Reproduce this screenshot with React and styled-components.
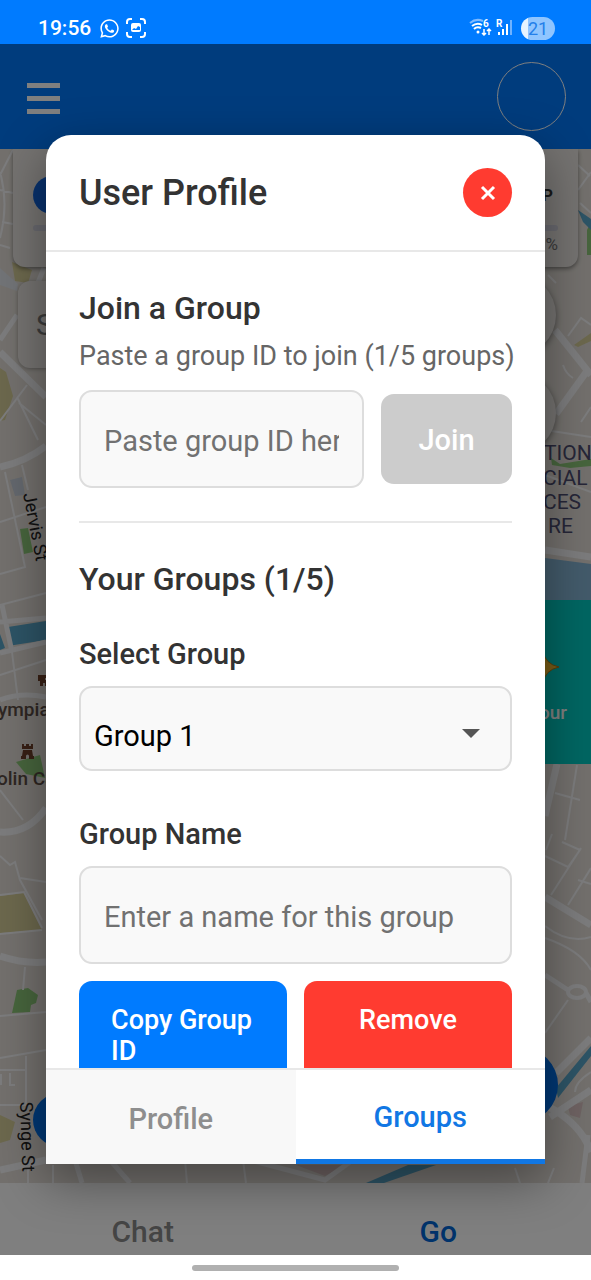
import { useState } from 'react';
import styled, { createGlobalStyle } from 'styled-components';
import { FaWhatsapp } from 'react-icons/fa';

const GlobalStyle = createGlobalStyle`
  * {
    box-sizing: border-box;
  }

  body {
    margin: 0;
    background: #ffffff;
    font-family: Roboto, 'Noto Sans', sans-serif;
  }

  button, input, select {
    font-family: inherit;
  }
`;

// === Device chrome ===
const Phone = styled.div`
  display: flex;
  flex-direction: column;
  height: 100vh;
  overflow: hidden;
`;

const StatusBar = styled.div`
  display: flex;
  align-items: center;
  justify-content: space-between;
  flex: none;
  height: 44px;
  padding: 12px 36px 0 38px;
  background: #007bff;
  color: #ffffff;
`;

const StatusGroup = styled.div`
  display: flex;
  align-items: center;
  gap: ${({ $gap }) => $gap}px;
`;

const Clock = styled.span`
  font-size: 21px;
  font-weight: 500;
  line-height: 24px;
  margin-right: 2px;
`;

const Battery = styled.span`
  width: 34px;
  height: 23px;
  margin-left: 5px;
  border-radius: 12px;
  background: linear-gradient(to right, #e6f3ff 21%, #8fc5ff 21%);
  color: #2380ea;
  font-size: 18px;
  line-height: 23px;
  text-align: center;
`;

const GestureBar = styled.div`
  display: flex;
  align-items: center;
  justify-content: center;
  flex: none;
  height: 25px;
  background: #ffffff;

  &::after {
    content: '';
    width: 35%;
    height: 6px;
    border-radius: 3px;
    background: #b0b0b0;
  }
`;

// === App behind the dialog ===
const Stage = styled.main`
  position: relative;
  flex: 1;
  min-height: 0;
  display: flex;
  flex-direction: column;
`;

const AppHeader = styled.header`
  display: flex;
  align-items: center;
  justify-content: space-between;
  flex: none;
  height: 105px;
  padding: 0 25px 0 27px;
  background: #0078fa;
`;

const MenuButton = styled.button`
  display: flex;
  flex-direction: column;
  gap: 8px;
  width: 33px;
  padding: 4px 0 0;
  border: 0;
  background: none;

  span {
    width: 100%;
    height: 5px;
    background: #ffffff;
  }
`;

const Avatar = styled.button`
  width: 69px;
  height: 69px;
  border: 1px solid #ffffff;
  border-radius: 50%;
  background: none;
`;

const MapArea = styled.section`
  position: relative;
  flex: 1;
  min-height: 0;
  overflow: hidden;
  background: #e6e1da;
`;

const MapDrawing = styled.svg`
  display: block;
  width: 100%;
  height: 100%;
`;

const ProgressCard = styled.div`
  position: absolute;
  top: 0;
  left: 13px;
  right: 13px;
  height: 118px;
  padding: 26px 20px 0;
  border-radius: 0 0 12px 12px;
  background: #eae7e3;
  box-shadow: 0 2px 4px rgba(0, 0, 0, 0.4);
`;

const ProgressRow = styled.div`
  display: flex;
  align-items: center;
  justify-content: space-between;
  height: 40px;
  padding-right: 5px;
  color: #333333;
  font-size: 17px;
  font-weight: 700;
`;

const LevelDot = styled.span`
  width: 38px;
  height: 38px;
  border-radius: 50%;
  background: #1264dc;
`;

const ProgressTrack = styled.div`
  height: 6px;
  margin: 10px 0 3px;
  border-radius: 3px;
  background: #d2d2de;
`;

const ProgressValue = styled.div`
  color: #777777;
  font-size: 17px;
  line-height: 20px;
  text-align: right;
`;

const SearchCard = styled.div`
  position: absolute;
  top: 132px;
  left: 18px;
  width: 60%;
  height: 87px;
  padding: 0 18px;
  border-radius: 12px;
  background: #eae7e3;
  box-shadow: 0 1px 4px rgba(0, 0, 0, 0.3);
  color: #777777;
  font-size: 30px;
  line-height: 87px;
`;

const MapControl = styled.button`
  position: absolute;
  top: ${({ $top }) => $top}px;
  right: 35px;
  width: 82px;
  height: 82px;
  border: 0;
  border-radius: 50%;
  background: #eae7e3;
  box-shadow: 0 2px 6px rgba(0, 0, 0, 0.4);
`;

const TourTile = styled.div`
  position: absolute;
  top: 451px;
  right: 0;
  display: flex;
  flex-direction: column;
  align-items: flex-end;
  gap: 19px;
  width: 120px;
  height: 164px;
  padding: 51px 24px 0 0;
  background: #00ccc4;
  color: #ffffff;
  font-size: 19px;
  font-weight: 500;
  line-height: 22px;

  svg {
    margin-right: 8px;
  }
`;

const RoundAction = styled.button`
  position: absolute;
  bottom: ${({ $bottom }) => $bottom}px;
  left: ${({ $left }) => ($left ? `${$left}px` : 'auto')};
  right: ${({ $right }) => ($right ? `${$right}px` : 'auto')};
  width: ${({ $size }) => $size}px;
  height: ${({ $size }) => $size}px;
  border: 0;
  border-radius: 50%;
  background: #0070ea;
`;

const BottomNav = styled.nav`
  display: flex;
  flex: none;
  height: 72px;
  padding-top: 24px;
  background: #ffffff;
`;

const NavLink = styled.a`
  flex: 1;
  padding-right: 10px;
  color: ${({ $active }) => ($active ? '#0066d6' : '#8a8a8a')};
  font-size: 30px;
  font-weight: 500;
  line-height: 50px;
  text-align: center;
  text-decoration: none;
`;

// === Dialog ===
const Overlay = styled.div`
  position: absolute;
  inset: 0;
  display: flex;
  align-items: center;
  justify-content: center;
  padding: 0 46px;
  background: rgba(0, 0, 0, 0.5);
`;

const Dialog = styled.section`
  display: flex;
  flex-direction: column;
  width: 100%;
  max-height: 85%;
  overflow: hidden;
  border-radius: 25px 25px 0 0;
  background: #ffffff;
  box-shadow: 0 16px 50px rgba(0, 0, 0, 0.4);
  color: #333333;
`;

const DialogHeader = styled.header`
  display: flex;
  align-items: center;
  justify-content: space-between;
  flex: none;
  padding: 33px 33px 32px;
  border-bottom: 2px solid #e8e8e8;
`;

const DialogTitle = styled.h2`
  margin: 0;
  font-size: 36px;
  font-weight: 500;
  line-height: 50px;
`;

const CloseButton = styled.button`
  display: grid;
  place-items: center;
  width: 49px;
  height: 49px;
  padding: 0;
  border: 0;
  border-radius: 50%;
  background: #ff3b30;
`;

const DialogBody = styled.div`
  flex: 1;
  min-height: 0;
  padding: 0 33px;
  overflow-y: auto;
  scrollbar-width: none;
`;

const Section = styled.section`
  padding: 32px 0 33px;

  & + & {
    border-top: 2px solid #e8e8e8;
  }
`;

const SectionTitle = styled.h3`
  margin: 0;
  font-size: 32px;
  font-weight: 500;
  line-height: 48px;
`;

const Hint = styled.label`
  display: block;
  margin-bottom: 10px;
  color: #666666;
  font-size: 27px;
  line-height: 48px;
  white-space: nowrap;
`;

const Field = styled.div`
  margin-top: ${({ $top }) => $top}px;
`;

const FieldLabel = styled.label`
  display: block;
  margin-bottom: 8px;
  font-size: 29px;
  font-weight: 500;
  line-height: 48px;
`;

const Row = styled.div`
  display: flex;
  align-items: ${({ $align }) => $align || 'center'};
  gap: 17px;
`;

const TextInput = styled.input`
  flex: 1;
  width: 100%;
  min-width: 0;
  height: 98px;
  padding: 4px 23px 0;
  border: 2px solid #dddddd;
  border-radius: 13px;
  background: #f9f9f9;
  color: #000000;
  font-size: 29px;

  &::placeholder {
    color: #717171;
    opacity: 1;
  }
`;

const JoinButton = styled.button`
  width: 131px;
  height: 90px;
  padding: 2px 0 0;
  border: 0;
  border-radius: 13px;
  background: #cccccc;
  color: #ffffff;
  font-size: 29px;
  font-weight: 500;
`;

const SelectWrap = styled.div`
  position: relative;

  svg {
    position: absolute;
    top: 50%;
    right: 32px;
    margin-top: 1px;
    pointer-events: none;
  }
`;

const Select = styled.select`
  display: block;
  width: 100%;
  height: 85px;
  padding: 16px 13px 0;
  border: 2px solid #dddddd;
  border-radius: 13px;
  appearance: none;
  background: #f9f9f9;
  color: #000000;
  font-size: 29px;
`;

const ActionButton = styled.button`
  display: flex;
  flex: 1;
  align-items: flex-start;
  justify-content: center;
  padding: 24px 32px;
  border: 0;
  border-radius: 13px;
  background: ${({ $danger }) => ($danger ? '#ff3b30' : '#007bff')};
  color: #ffffff;
  font-size: 27px;
  font-weight: 500;
  line-height: 31px;
  text-align: left;
`;

const TabList = styled.div`
  display: flex;
  flex: none;
  border-top: 2px solid #e8e8e8;
`;

const Tab = styled.button`
  flex: 1;
  height: 94px;
  padding: 4px 0 0;
  border: 0;
  border-bottom: ${({ $active }) => ($active ? '5px solid #1177e4' : '0')};
  background: ${({ $active }) => ($active ? '#ffffff' : '#f8f8f8')};
  color: ${({ $active }) => ($active ? '#1177e4' : '#8e8e8e')};
  font-size: 29px;
  font-weight: 500;
`;

const roads = [
  { width: 7, lines: ['M0 352 L46 397', 'M0 467 Q25 462 46 446', 'M0 832 Q28 834 46 808', 'M0 956 Q24 964 46 962', 'M0 1170 L46 1160', 'M555 330 L591 375', 'M587 371 L556 414', 'M545 550 L591 557', 'M557 764 L545 816', 'M545 897 L591 925', 'M556 1073 L591 1038', 'M550 1117 L591 1090', 'M545 1105 Q580 1122 591 1152'] },
  { width: 5, lines: ['M17 315 L0 340', 'M0 622 L46 618', 'M0 653 L46 642', 'M2 605 L12 652', 'M545 975 L568 990', 'M586 993 L591 1002', 'M588 1135 L582 1183', 'M44 268 L35 290', 'M0 700 Q20 692 46 697', 'M250 1160 L325 1180 L350 1162', 'M75 1160 L82 1183', 'M110 1160 L130 1183'] },
  { width: 2, lines: ['M0 172 Q9 204 0 238', 'M13 150 L0 175', 'M0 190 L13 193', 'M2 222 L13 224', 'M0 245 L10 248', 'M0 421 L27 385', 'M17 397 L38 440', 'M19 403 L46 425', 'M5 472 L25 567 L0 574', 'M22 465 L28 490', 'M0 522 L46 507', 'M0 605 L46 593', 'M12 652 L18 700', 'M0 675 L46 660', 'M0 790 L23 820', 'M0 856 L10 865 L15 862 L20 880 L42 920', 'M20 878 L46 882', 'M0 895 L24 892 L42 928', 'M0 934 L42 930', 'M25 967 L23 990', 'M0 1016 L46 1012', 'M0 1058 L46 1050', 'M26 1056 V1105 H0', 'M0 1070 H25 M1 1074 V1085 M10 1073 V1085 H15', 'M578 165 L590 176', 'M578 190 L591 172', 'M580 203 L591 213', 'M548 275 L556 283', 'M568 336 L581 318 L591 325', 'M563 365 Q566 374 573 378', 'M581 422 L591 407', 'M545 430 L591 437', 'M545 475 L591 492', 'M577 765 L565 840', 'M555 793 L580 800', 'M545 856 L568 867 L580 850 L562 842', 'M552 834 L546 850', 'M551 895 L581 848', 'M568 905 L591 868', 'M578 880 L591 884', 'M545 926 Q568 944 591 937', 'M545 938 Q580 950 591 970', 'M545 1033 L568 1000', 'M575 1092 Q575 1082 591 1072', 'M515 1168 L520 1183', 'M554 1168 L548 1183', 'M185 1160 L187 1183', 'M243 1160 L246 1183', 'M28 1165 V1183', 'M53 1165 V1183'] },
];

const CityMap = () => (
  <MapDrawing viewBox="0 149 591 1034" preserveAspectRatio="xMidYMid slice" aria-hidden="true">
    <g fill="#d8d09a">
      <path d="M12 262 L32 270 L28 283 L15 281 Z" />
      <path d="M0 368 L6 372 L13 396 L5 420 L0 421 Z" />
      <path d="M0 896 L24 893 L42 930 L0 933 Z" />
      <path d="M0 1115 L15 1122 L10 1140 L0 1143 Z" />
      <path d="M574 345 L591 333 V341 L578 347 Z" />
    </g>
    <g fill="#8fcb7a">
      <path d="M20 529 L28 528 L33 552 L24 554 Z" />
      <path d="M16 762 L40 755 L45 778 L26 774 Z" />
      <path d="M17 990 L28 988 L38 995 L36 1003 L31 1005 L30 1012 L12 1013 Z" />
      <path d="M587 230 L591 222 V255 H587 Z" />
      <path d="M551 458 L560 464 L591 459 V466 L570 468 L552 465 Z" />
    </g>
    <g fill="#5ba8cc">
      <path d="M8 627 L46 621 V640 L8 646 Z" />
      <path d="M0 634 L5 648 L0 650 Z" />
      <path d="M578 210 L591 219 V230 L583 222 Z" />
      <path d="M556 1088 L591 1046 V1056 L558 1098 Z" />
      <path d="M366 1183 L408 1165 H436 L384 1183 Z" />
    </g>
    <path d="M545 558 L591 564 V602 H545 Z" fill="#86b6d6" />
    <path d="M10 480 L22 477 L25 495 L15 496 Z" fill="#c8d0dc" />
    <path d="M0 268 L18 284 L17 291 L0 285 Z" fill="#e4e8ee" />
    <path d="M568 1106 L583 1102 L580 1118 L570 1115 Z M296 1165 H346 L325 1176 Z" fill="#dcc4c4" />
    {roads.map(({ width, lines }) => (
      <path key={width} d={lines.join(' ')} fill="none" stroke="#f8f8fa" strokeWidth={width} />
    ))}
    <ellipse cx="577" cy="992" rx="9" ry="6" fill="none" stroke="#f8f8fa" strokeWidth="4" />
    <g fill="#70402a">
      <path d="M22 744 h2 v2 h2 v-2 h3 v2 h2 v-2 h2 v5 h-11 Z M23 750 h9 l1 6 h1 v3 h-5 v-3 a1 1 0 0 0 -3 0 v3 h-5 v-3 h1 Z" />
      <path d="M38 675 h9 v3 h-2 v2 h2 v6 h-2 v-3 h-2 v3 h-3 v-5 h-2 Z" />
    </g>
    <g fontSize="19" fontWeight="500" fill="#5c4d45">
      <text x="-2" y="716">ympia</text>
      <text x="-3" y="785">olin Ca</text>
    </g>
    <g fontSize="18" fill="#222222">
      <text transform="translate(23 494) rotate(79)">Jervis St</text>
      <text transform="translate(20 1102) rotate(88)">Synge St</text>
    </g>
    <g fontSize="21" fill="#4c4c70">
      <text x="544" y="460">TION</text>
      <text x="543" y="485">CIAL</text>
      <text x="543" y="509">CES</text>
      <text x="548" y="533">RE</text>
    </g>
  </MapDrawing>
);

const CaptureIcon = () => (
  <svg width="20" height="20" viewBox="0 0 20 20" fill="none" aria-hidden="true">
    <path d="M1 6 V4 Q1 1 4 1 H6 M14 1 H16 Q19 1 19 4 V6 M19 14 V16 Q19 19 16 19 H14 M6 19 H4 Q1 19 1 16 V14" stroke="#fff" strokeWidth="2" />
    <rect x="5" y="5" width="10" height="9" rx="2" fill="#fff" />
    <path d="M6 12 L8 10 L10 11 L12 8 L14 9 V12 Z" fill="#007bff" />
  </svg>
);

const WifiIcon = () => (
  <svg width="24" height="20" viewBox="0 0 24 20" fill="none" aria-hidden="true">
    <path d="M1 5 Q7 0 14 3" stroke="#7fbaff" strokeWidth="2" />
    <path d="M3 8 Q8 4 13 7 M5 11 Q8 8 12 10" stroke="#fff" strokeWidth="2" />
    <circle cx="9" cy="14" r="1.5" fill="#fff" />
    <text x="14" y="9" fill="#fff" fontSize="10" fontWeight="700">6</text>
    <path d="M15 11 V17 M13 15 L15 17 L17 15 M20 17 V11 M18 13 L20 11 L22 13" stroke="#fff" strokeWidth="1.5" />
  </svg>
);

const SignalIcon = () => (
  <svg width="17" height="20" viewBox="0 0 17 20" aria-hidden="true">
    <text x="0" y="9" fill="#fff" fontSize="10" fontWeight="700">R</text>
    <path d="M2 14 h2 v3 h-2 Z M6 11 h2 v6 h-2 Z M10 6 h2 v11 h-2 Z" fill="#fff" />
    <path d="M14 2 h2 v15 h-2 Z" fill="#6fb2ff" />
  </svg>
);

export default function App() {
  const [tab, setTab] = useState('groups');

  return (
    <>
      <GlobalStyle />
      <Phone>
        <StatusBar>
          <StatusGroup $gap={6}>
            <Clock>19:56</Clock>
            <FaWhatsapp size={21} />
            <CaptureIcon />
          </StatusGroup>
          <StatusGroup $gap={3}>
            <WifiIcon />
            <SignalIcon />
            <Battery>21</Battery>
          </StatusGroup>
        </StatusBar>

        <Stage>
          <AppHeader>
            <MenuButton aria-label="Menu">
              <span />
              <span />
              <span />
            </MenuButton>
            <Avatar aria-label="Account" />
          </AppHeader>

          <MapArea>
            <CityMap />
            <ProgressCard>
              <ProgressRow>
                <LevelDot />
                <span>P</span>
              </ProgressRow>
              <ProgressTrack />
              <ProgressValue>%</ProgressValue>
            </ProgressCard>
            <SearchCard>S</SearchCard>
            <MapControl $top={125} aria-label="Zoom in" />
            <MapControl $top={223} aria-label="Zoom out" />
            <TourTile>
              <svg width="32" height="32" viewBox="0 0 32 32" aria-hidden="true">
                <path d="M16 0 Q18 13 32 16 Q18 19 16 32 Q14 19 0 16 Q14 13 16 0 Z" fill="#f0b82c" stroke="#b87a10" strokeWidth="1" />
              </svg>
              <span>Tour</span>
            </TourTile>
            <RoundAction $left={33} $bottom={36} $size={54} aria-label="Locate" />
            <RoundAction $right={33} $bottom={60} $size={76} aria-label="Add" />
          </MapArea>

          <BottomNav>
            <NavLink href="#chat">Chat</NavLink>
            <NavLink href="#go" $active>Go</NavLink>
          </BottomNav>

          <Overlay>
            <Dialog role="dialog" aria-modal="true" aria-labelledby="profile-title">
              <DialogHeader>
                <DialogTitle id="profile-title">User Profile</DialogTitle>
                <CloseButton aria-label="Close">
                  <svg width="16" height="16" viewBox="0 0 16 16" fill="none">
                    <path d="M2 2 L14 14 M14 2 L2 14" stroke="#fff" strokeWidth="3" />
                  </svg>
                </CloseButton>
              </DialogHeader>

              <DialogBody>
                <Section>
                  <SectionTitle>Join a Group</SectionTitle>
                  <Hint htmlFor="group-id">Paste a group ID to join (1/5 groups)</Hint>
                  <Row>
                    <TextInput id="group-id" placeholder="Paste group ID here" />
                    <JoinButton>Join</JoinButton>
                  </Row>
                </Section>

                <Section>
                  <SectionTitle>Your Groups (1/5)</SectionTitle>
                  <Field $top={27}>
                    <FieldLabel htmlFor="group-select">Select Group</FieldLabel>
                    <SelectWrap>
                      <Select id="group-select">
                        <option>Group 1</option>
                      </Select>
                      <svg width="18" height="9" viewBox="0 0 18 9" aria-hidden="true">
                        <path d="M0 0 H18 L9 9 Z" fill="#555555" />
                      </svg>
                    </SelectWrap>
                  </Field>
                  <Field $top={39}>
                    <FieldLabel htmlFor="group-name">Group Name</FieldLabel>
                    <Row>
                      <TextInput id="group-name" placeholder="Enter a name for this group" />
                    </Row>
                  </Field>
                  <Field $top={17}>
                    <Row $align="stretch">
                      <ActionButton>Copy Group ID</ActionButton>
                      <ActionButton $danger>Remove</ActionButton>
                    </Row>
                  </Field>
                </Section>
              </DialogBody>

              <TabList role="tablist">
                <Tab role="tab" aria-selected={tab === 'profile'} $active={tab === 'profile'} onClick={() => setTab('profile')}>
                  Profile
                </Tab>
                <Tab role="tab" aria-selected={tab === 'groups'} $active={tab === 'groups'} onClick={() => setTab('groups')}>
                  Groups
                </Tab>
              </TabList>
            </Dialog>
          </Overlay>
        </Stage>
        <GestureBar />
      </Phone>
    </>
  );
}
